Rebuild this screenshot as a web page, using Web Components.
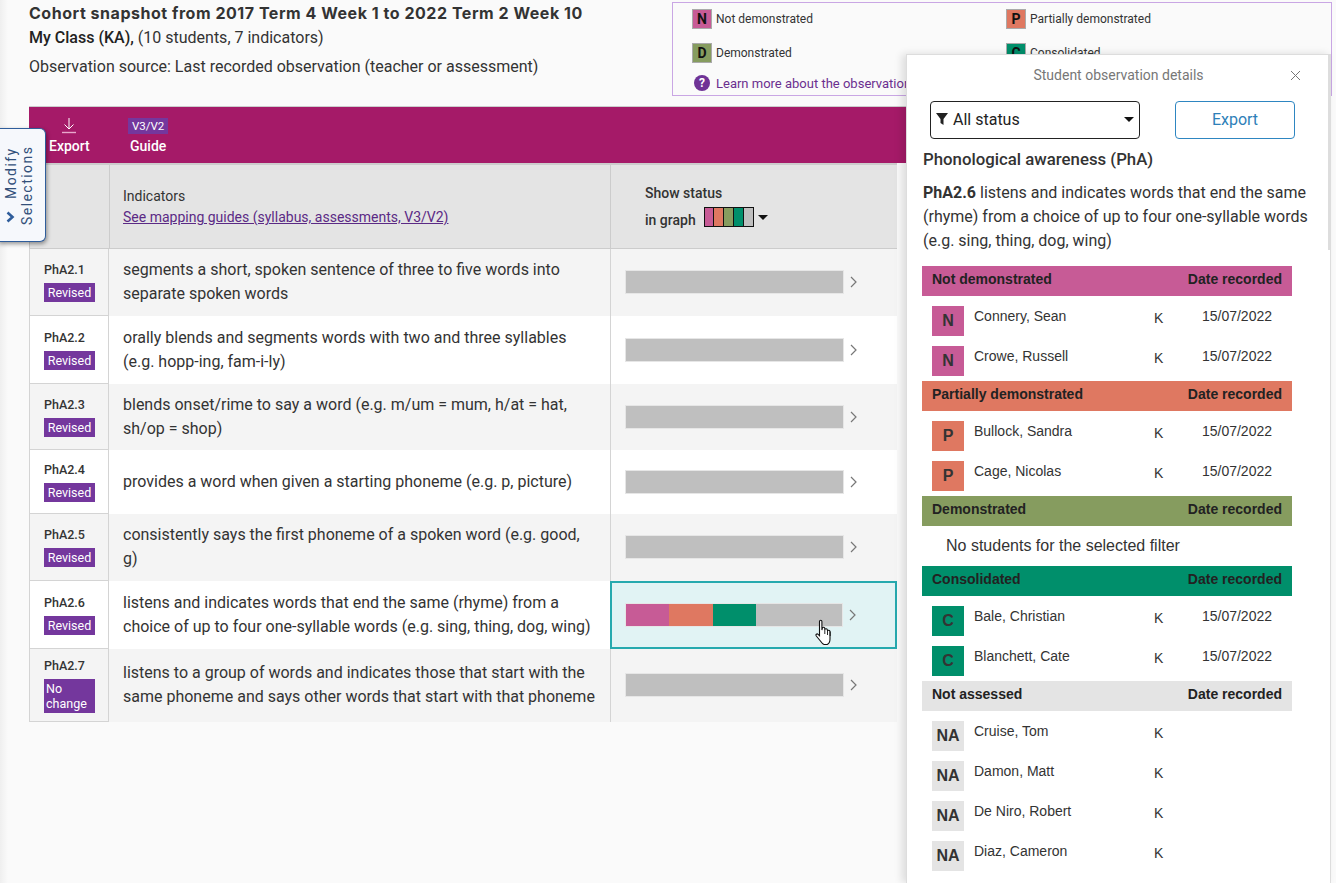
<!DOCTYPE html>
<html><head><meta charset="utf-8"><style>
html,body{margin:0;padding:0;height:883px;overflow:hidden;background:#fafafa;font-family:Roboto,sans-serif;color:#333}
</style></head><body>
<x-app></x-app>
<script>
const C={N:'#c75b96',P:'#df7861',D:'#869c5f',C:'#008f6b',NA:'#e4e4e4'};
function def(n,css,html){customElements.define(n,class extends HTMLElement{connectedCallback(){if(this.shadowRoot)return;const s=this.attachShadow({mode:'open'});s.innerHTML='<style>'+css+'</style>'+(typeof html==='function'?html(this):html);}});}

def('x-key',`:host{display:flex;align-items:center;gap:4px;font:12px Roboto,sans-serif;color:#333;height:20px}
b{width:18px;height:18px;border:1px solid #aaa;display:flex;align-items:center;justify-content:center;font:700 14px Roboto,sans-serif;color:#111}`,
e=>`<b style="background:${C[e.getAttribute('s')]}">${e.getAttribute('s')}</b><slot></slot>`);

def('x-legend',`:host{display:block;box-sizing:border-box;width:660px;height:94px;margin-top:2px;border:1px solid #c9a6e4;padding:4px 19px 0;position:relative}
.g{display:grid;grid-template-columns:314px 1fr;row-gap:14px}
.l{display:flex;align-items:center;gap:6px;margin-top:12px;font:13px Roboto,sans-serif;color:#6b2f8f;padding-left:2px}
i{width:16px;height:16px;border-radius:50%;background:#6f3396;color:#fff;font:700 12px/16px Roboto,sans-serif;text-align:center}`,
`<div class="g" style="margin-top:2px"><x-key s="N">Not demonstrated</x-key><x-key s="P">Partially demonstrated</x-key><x-key s="D">Demonstrated</x-key><x-key s="C">Consolidated</x-key></div>
<div class="l"><i>?</i><span>Learn more about the observation status</span></div>`);

def('x-tab',`:host{display:flex;box-sizing:border-box;position:absolute;left:-2px;top:128px;width:48px;height:114px;background:#f6f8fc;border:1px solid #2f5d9b;border-left:0;border-radius:0 6px 6px 0;box-shadow:1px 2px 4px rgba(0,0,0,.4);z-index:5}
.r{writing-mode:vertical-rl;transform:rotate(180deg);font:14px/16px Roboto,sans-serif;letter-spacing:1.450px;color:#33507a;position:absolute;left:5px;top:18px;height:78px;text-align:left;white-space:nowrap}
.r span{display:block}.r .m{padding-top:26px}
svg{position:absolute;left:8px;top:82px}`,
`<div class="r"><span class="m">Modify</span><span>Selections</span></div><svg width="9" height="12" viewBox="0 0 9 12"><path d="M1.500 1.500 6.500 6 1.500 10.500" fill="none" stroke="#2f5d9b" stroke-width="2.600"/></svg>`);

def('x-bar',`:host{display:flex;height:22px;width:217px;border:1px solid #e6e6e6;background:#bfbfbf}
:host([parts*=":"]){width:216px}
span{display:block;height:100%}`,
e=>(e.getAttribute('parts')||'').split(',').filter(Boolean).map(p=>{const[a,w]=p.split(':');return `<span style="background:${C[a]};width:${w}px"></span>`}).join(''));

def('x-row',`:host{display:grid;grid-template-columns:80px 501px 287px;background:var(--bg,#f4f4f4);height:var(--h);box-sizing:border-box;position:relative}
.a{box-sizing:border-box;border:1px solid #d4d4d4;border-top:0;padding-left:14px;display:flex;flex-direction:column;justify-content:center;align-items:flex-start;gap:6px;font:500 12.500px/15px Roboto,sans-serif;color:#333}
.t{display:inline-block;background:#74379d;color:#fff;font:400 12.500px/15px Roboto,sans-serif;padding:2px 1px;width:51px;text-align:center;box-sizing:border-box}
.t.w{text-align:left;padding:2px 2px}
.b{display:flex;align-items:center;padding:0 14px 1px 14px;font:16px/24px Roboto,sans-serif;color:#333}
.c{box-sizing:border-box;border-left:1px solid #d4d4d4;display:flex;align-items:center;padding:0 0 1px 14px;gap:6px}
:host([sel]) .c{background:#e1f3f4;outline:2px solid #26a9ae;outline-offset:-2px;border-left:0;padding-left:15px}
svg{flex:none}`,
e=>{const s=e.getAttribute('tag');return `<div class="a"><span>${e.getAttribute('code')}</span><span class="t ${s.length>7?'w':''}">${s}</span></div><div class="b"><span><slot></slot></span></div><div class="c"><x-bar parts="${e.getAttribute('parts')||''}"></x-bar><svg width="7" height="12" viewBox="0 0 7 12"><path d="M1 1 6 6 1 11" fill="none" stroke="#777" stroke-width="1.200"/></svg></div>`});

def('x-table',`:host{display:block;position:absolute;left:29px;top:106px;width:880px}
.m{height:57px;background:#a51a68;border-top:1px solid #ccc;box-sizing:border-box;display:flex;color:#fff;font:500 14px Roboto,sans-serif}
.m div{display:flex;flex-direction:column;align-items:center;position:absolute;top:11px}
.v{background:#74379d;font:400 11.500px/16px Roboto,sans-serif;padding:0 4px;height:16px;margin-bottom:4px}
.h{display:grid;grid-template-columns:80px 501px 287px;height:86px;background:#e4e4e4;border-top:2px solid #ccc;border-bottom:1px solid #ccc;box-sizing:border-box;font:500 14px Roboto,sans-serif;color:#333;width:868px}
.h>div{border-left:1px solid #ccc;box-sizing:border-box}
.i{padding:21px 0 0 13px;font-weight:400;font-size:14px;line-height:21px}
a{color:#5b2a85;text-decoration:underline;font-weight:400;font-size:14px}
.s{padding:15px 0 0 34px;font-size:14px;line-height:27px;font-weight:500}
.sw{display:inline-flex;height:18px;width:48px;border:1px solid #111;vertical-align:-1px;margin-left:8px}
.sw i{flex:1;border-right:1px solid #111}.sw i:last-child{border:0}
.tr{display:inline-block;border:5px solid transparent;border-top:5px solid #111;border-bottom:0;margin-left:4px;vertical-align:5px}
.rows{width:868px}`,
`<div class="m"><div style="left:20px"><svg width="16" height="17" viewBox="0 0 16 17" style="margin-bottom:4px"><path d="M8 1v11M3.500 7.500 8 12l4.500-4.500" fill="none" stroke="#fff" stroke-width="1"/><path d="M1 15.500h14" stroke="#e8a8cc" stroke-width="1.400"/></svg>Export</div>
<div style="left:99px;top:12px"><span class="v">V3/V2</span>Guide</div></div>
<div class="h"><div></div><div class="i">Indicators<br><a>See mapping guides (syllabus, assessments, V3/V2)</a></div><div class="s">Show status<br>in graph<span class="sw"><i style="background:${C.N}"></i><i style="background:${C.P}"></i><i style="background:${C.D}"></i><i style="background:${C.C}"></i><i style="background:#bfbfbf"></i></span><span class="tr"></span></div></div>
<div class="rows"><slot></slot></div>`);

def('x-group',`:host{display:flex;justify-content:space-between;align-items:center;box-sizing:border-box;width:370px;height:30px;padding:0 10px 4px;font:700 14px "Liberation Sans",sans-serif;color:#222;background:var(--c)}`,
`<slot></slot><span>Date recorded</span>`);

def('x-stu',`:host{display:block;position:relative;height:40px;width:370px;font:14px "Liberation Sans",sans-serif;color:#333}
b{position:absolute;left:10px;top:0;width:32px;height:30px;display:flex;align-items:center;justify-content:center;font:700 16px "Liberation Sans",sans-serif;color:#333}
.n{position:absolute;left:52px;top:2px}.k{position:absolute;left:232px;top:4px}.d{position:absolute;right:20px;top:2px}`,
e=>{const s=e.getAttribute('s');return `<b style="background:${C[s]}">${s}</b><span class="n"><slot></slot></span><span class="k">K</span><span class="d">${s==='NA'?'':'15/07/2022'}</span>`});

def('x-panel',`:host{display:block;position:absolute;left:906px;top:54px;width:425px;height:829px;box-sizing:border-box;background:#fff;border:1px solid #ddd;border-bottom:0;box-shadow:-4px 0 8px rgba(0,0,0,.12);overflow:hidden;padding:0 0 0 15px;z-index:6}
.t{height:46px;display:flex;align-items:center;justify-content:center;font:14px Roboto,sans-serif;color:#777;position:relative;margin-left:-15px;padding-bottom:6px;box-sizing:border-box}
.t svg{position:absolute;right:29px;top:15px}
.f{display:flex;margin:0 0 0 8px;gap:35px}
.sel{box-sizing:border-box;width:210px;height:38px;border:1px solid #222;border-radius:4px;display:flex;align-items:center;font:16px Roboto,sans-serif;color:#222;padding:0 5px 2px 4px;gap:4px}
.sel span{flex:1}
.ex{box-sizing:border-box;width:120px;height:38px;border:1px solid #2e86c1;border-radius:4px;display:flex;align-items:center;justify-content:center;font:16px Roboto,sans-serif;color:#2e7fb8;padding-bottom:2px}
h3{margin:8px 0 0 1px;font:500 16.800px/24px Roboto,sans-serif;color:#333}
p{margin:10px 0 0 1px;width:395px;font:16px/24px Roboto,sans-serif;color:#333}
p b{font-weight:700}
.list{margin-top:13px}
.sb{position:absolute;right:0;top:0;width:2px;height:195px;background:#ddd}
.none{height:40px;padding:11px 0 0 24px;box-sizing:border-box;font:16px "Liberation Sans",sans-serif;color:#333}
.sp{height:10px}`,
`<div class="t">Student observation details<svg width="11" height="11" viewBox="0 0 11 11"><path d="M1 1l9 9M10 1l-9 9" stroke="#777" stroke-width="1"/></svg></div>
<div class="f"><div class="sel"><svg width="14" height="14" viewBox="0 0 14 14"><path d="M1 1h12L8.500 7v6L5.500 11V7z" fill="#222"/></svg><span>All status</span><svg width="10" height="5" viewBox="0 0 10 5"><path d="M0 0h10L5 5z" fill="#111"/></svg></div><div class="ex">Export</div></div>
<h3>Phonological awareness (PhA)</h3>
<p><b>PhA2.6</b> listens and indicates words that end the same (rhyme) from a choice of up to four one-syllable words (e.g. sing, thing, dog, wing)</p>
<div class="list">
<x-group style="--c:${C.N}">Not demonstrated</x-group><div class="sp"></div><x-stu s="N">Connery, Sean</x-stu><x-stu s="N" style="height:35px">Crowe, Russell</x-stu>
<x-group style="--c:${C.P}">Partially demonstrated</x-group><div class="sp"></div><x-stu s="P">Bullock, Sandra</x-stu><x-stu s="P" style="height:35px">Cage, Nicolas</x-stu>
<x-group style="--c:${C.D}">Demonstrated</x-group><div class="none">No students for the selected filter</div>
<x-group style="--c:${C.C}">Consolidated</x-group><div class="sp"></div><x-stu s="C">Bale, Christian</x-stu><x-stu s="C" style="height:35px">Blanchett, Cate</x-stu>
<x-group style="--c:${C.NA}">Not assessed</x-group><div class="sp"></div><x-stu s="NA">Cruise, Tom</x-stu><x-stu s="NA">Damon, Matt</x-stu><x-stu s="NA">De Niro, Robert</x-stu><x-stu s="NA">Diaz, Cameron</x-stu>
</div><div class="sb"></div>`);

def('x-head',`:host{display:block;padding:4px 0 0 29px;width:640px}
h1{margin:0;font:700 16px/18px Inter,sans-serif;color:#333;letter-spacing:.53px;white-space:nowrap}
div{font:16px/20px Roboto,sans-serif;color:#333}
.a{margin-top:6px}.b{margin-top:9px}b{font-weight:500;color:#222}`,
`<h1>Cohort snapshot from 2017 Term 4 Week 1 to 2022 Term 2 Week 10</h1><div class="a"><b>My Class (KA),</b> (10 students, 7 indicators)</div><div class="b">Observation source: Last recorded observation (teacher or assessment)</div>`);

def('x-cursor',`:host{display:block;position:absolute;left:815px;top:619px;z-index:4}`,
`<svg width="20" height="27" viewBox="0 0 20 27"><path d="M4.500 2.500c0-1.600 2.400-1.600 2.400 0V11l.6-2.500c1.500-.6 2.300.2 2.300 1.200l.3.300c1.500-.6 2.300.1 2.300 1.200l.3.200c1.300-.5 2.300.2 2.300 1.400V20c0 2.500-1.300 4.800-2.800 5.500H9c-1.600-.6-2.800-2.300-4-4L1.300 17c-1-1.400.6-2.700 1.800-1.700l1.400 1.400z" fill="#fff" stroke="#111" stroke-width="1.100"/><path d="M9.800 10v5M12.500 11v5M15.200 12.500V17" stroke="#111" stroke-width=".9"/></svg>`);

def('x-app',`:host{display:block;position:relative;width:1336px;height:883px;overflow:hidden}
.top{display:flex;justify-content:space-between;padding-right:4px}
.sh{position:absolute;left:0;top:0;width:8px;height:883px;background:linear-gradient(90deg,#efefef,#fafafa)}`,
`<div class="sh"></div><div class="top"><x-head></x-head><x-legend></x-legend></div>
<x-tab></x-tab>
<x-table>
<x-row style="--h:67px;--bg:#f4f4f4" code="PhA2.1" tag="Revised">segments a short, spoken sentence of three to five words into separate spoken words</x-row>
<x-row style="--h:68px;--bg:#fff" code="PhA2.2" tag="Revised">orally blends and segments words with two and three syllables (e.g. hopp-ing, fam-i-ly)</x-row>
<x-row style="--h:66px;--bg:#f4f4f4" code="PhA2.3" tag="Revised">blends onset/rime to say a word (e.g. m/um = mum, h/at = hat, sh/op = shop)</x-row>
<x-row style="--h:64px;--bg:#fff" code="PhA2.4" tag="Revised">provides a word when given a starting phoneme (e.g. p, picture)</x-row>
<x-row style="--h:67px;--bg:#f4f4f4" code="PhA2.5" tag="Revised">consistently says the first phoneme of a spoken word (e.g. good, g)</x-row>
<x-row style="--h:68px;--bg:#fff" sel code="PhA2.6" tag="Revised" parts="N:43,P:44,C:43">listens and indicates words that end the same (rhyme) from a choice of up to four one-syllable words (e.g. sing, thing, dog, wing)</x-row>
<x-row style="--h:73px;--bg:#f4f4f4" code="PhA2.7" tag="No change">listens to a group of words and indicates those that start with the same phoneme and says other words that start with that phoneme</x-row>
</x-table>
<x-cursor></x-cursor>
<x-panel></x-panel>`);
</script>
</body></html>
